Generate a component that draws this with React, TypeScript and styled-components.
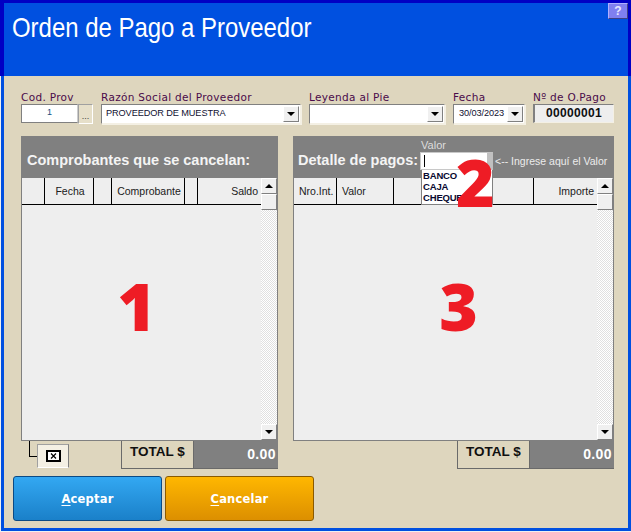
import { FC, PropsWithChildren } from 'react';
import styled, { createGlobalStyle } from 'styled-components';

const GlobalStyle = createGlobalStyle`
  html, body { margin: 0; padding: 0; background: #f0f0f0; }
  * { box-sizing: border-box; }
`;

const Window = styled.div`
  position: relative;
  width: 630px;
  height: 531px;
  margin-left: 1px;
  background: #ded6be;
  border: solid #0050e0;
  border-width: 0 3px 3px 3px;
  font-family: 'Liberation Sans', Arial, sans-serif;
`;

const Header = styled.header`
  height: 76px;
  margin: 0 -3px 0 -4px;
  padding: 9px 0 0 8px;
  background: #0050e0;
  border: solid #0000c4;
  border-width: 3px 3px 0 4px;
  color: #fff;
`;

const Title = styled.h1`
  margin: 0;
  font-size: 28px;
  line-height: 32px;
  font-weight: 400;
  white-space: nowrap;
  transform: scaleX(0.855);
  transform-origin: 0 0;
`;

const HelpButton = styled.button`
  position: absolute;
  top: 3px;
  right: 0;
  width: 20px;
  height: 16px;
  padding: 0;
  background: #8080f0;
  border: 1px solid;
  border-color: #b0b0ff #404080 #404080 #b0b0ff;
  color: #e8e8ff;
  font: bold 12px 'Liberation Sans', sans-serif;
`;

const Body = styled.main`
  padding: 14px 14px 0 17px;
`;

const FormRow = styled.div`
  display: flex;
  gap: 8px;
  height: 46px;
`;

const Field = styled.div<{ $width: number }>`
  width: ${({ $width }) => $width}px;
  flex: none;
`;

const Label = styled.label`
  display: block;
  height: 14px;
  font-family: 'DejaVu Sans', sans-serif;
  font-size: 10.5px;
  letter-spacing: 0.32px;
  line-height: 14px;
  color: #4a0a4a;
  white-space: nowrap;
`;

const InputRow = styled.div`
  display: flex;
  height: 20px;
`;

const TextBox = styled.div`
  width: 57px;
  height: 19px;
  background: #fff;
  border: 1px solid #808080;
  border-right-color: #ccc;
  color: #205080;
  font-size: 9px;
  line-height: 14px;
  text-align: center;
`;

const DotsButton = styled.div`
  width: 15px;
  height: 20px;
  background: #e6dfc9;
  border: 1px solid #a0a0a0;
  border-right-color: #fff;
  border-bottom-color: #fff;
  color: #404040;
  font-size: 9px;
  line-height: 22px;
  text-align: center;
`;

const Combo = styled.div`
  display: flex;
  justify-content: space-between;
  width: 100%;
  height: 20px;
  padding: 1px;
  background: #fff;
  border: 1px solid;
  border-color: #808080 #f4f0e4 #f4f0e4 #808080;
  box-shadow: 1px 1px 0 #f4f0e4;
`;

const ComboText = styled.span<{ $inset?: number }>`
  padding-left: ${({ $inset }) => $inset ?? 3}px;
  font-size: 9.2px;
  line-height: 14px;
  color: #101030;
  white-space: nowrap;
  letter-spacing: -0.1px;
`;

const ArrowButton = styled.span`
  flex: none;
  display: flex;
  align-items: center;
  justify-content: center;
  width: 16px;
  height: 16px;
  background: #f0f0f0;
  border: 1px solid;
  border-color: #fff #808080 #808080 #fff;
`;

const Triangle = styled.i<{ $up?: boolean }>`
  width: 0;
  height: 0;
  border-left: 4px solid transparent;
  border-right: 4px solid transparent;
  ${({ $up }) => ($up ? 'border-bottom: 4px solid #000;' : 'border-top: 4px solid #000;')}
`;

const NumberBox = styled.div`
  width: 81px;
  height: 19px;
  background: #eeeeee;
  border: 1px solid;
  border-color: #808080 #f4f0e4 #f4f0e4 #808080;
  border-width: 1px 1px 1px 2px;
  font-size: 12px;
  font-weight: 700;
  line-height: 17px;
  text-align: center;
  letter-spacing: 0.3px;
  color: #101010;
`;

const Panels = styled.div`
  display: flex;
  gap: 15px;
`;

const Panel = styled.section<{ $width: number }>`
  position: relative;
  width: ${({ $width }) => $width}px;
  flex: none;
`;

const PanelHeader = styled.div<{ $inset: number }>`
  display: flex;
  align-items: center;
  height: 41px;
  padding: 8px 0 0 ${({ $inset }) => $inset}px;
  background: #808080;
  color: #f4f4f4;
`;

const PanelTitle = styled.h2`
  margin: -2px 0 0;
  font-size: 14.5px;
  font-weight: 700;
  white-space: nowrap;
`;

const ValorField = styled.div`
  position: relative;
  width: 73px;
  height: 18px;
  margin: 0 2px 0 2px;
  background: #fff;
  border: 1px solid #c8c8c8;
  border-right: 6px solid #c0c0c0;
`;

const Caret = styled.i`
  position: absolute;
  left: 3px;
  top: 2px;
  width: 1px;
  height: 12px;
  background: #000;
`;

const ValorCaption = styled.span`
  position: absolute;
  left: 0;
  top: -14px;
  font-size: 11px;
  line-height: 12px;
  color: #dcdcdc;
`;

const DropList = styled.ul`
  position: absolute;
  left: 0;
  top: 17px;
  width: 72px;
  height: 35px;
  margin: 0;
  padding: 0 0 0 1px;
  list-style: none;
  background: #fff;
  border: 1px solid #808080;
  border-top: 0;
  overflow: hidden;
  z-index: 1;
  font-size: 9.5px;
  font-weight: 700;
  letter-spacing: -0.2px;
  line-height: 11px;
  color: #080830;
`;

const Hint = styled.span`
  font-size: 10.5px;
  color: #ececec;
  white-space: nowrap;
`;

const Grid = styled.div`
  height: 264px;
  background: #eeeeee;
  border: 1px solid #808080;
  border-top: 0;
  display: flex;
  flex-direction: column;
`;

const GridInner = styled.div`
  flex: 1;
  display: flex;
  min-height: 0;
`;

const GridMain = styled.div`
  flex: 1;
  display: flex;
  flex-direction: column;
`;

const ColumnRow = styled.div`
  display: flex;
  height: 28px;
  border-top: 1px solid #808080;
  border-bottom: 1px solid #000;
`;

const Column = styled.div<{ $width?: number; $align?: string }>`
  ${({ $width }) => ($width ? `width: ${$width}px; flex: none;` : 'flex: 1;')}
  border-right: 1px solid #000;
  padding: 0 3px 0 5px;
  font-size: 10.5px;
  line-height: 26px;
  color: #202020;
  text-align: ${({ $align }) => $align ?? 'center'};
  white-space: nowrap;
  &:last-child { border-right: 0; }
`;

const GridBody = styled.div`
  flex: 1;
  display: flex;
  align-items: center;
  justify-content: center;
  padding-bottom: 36px;
`;

const BigNumber = styled.span<{ $shift?: number }>`
  margin-left: ${({ $shift }) => $shift ?? 0}px;
  font-family: 'Open Sans', sans-serif;
  font-size: 66px;
  font-weight: 800;
  line-height: 66px;
  color: #ee1c25;
`;

const FloatingTwo = styled(BigNumber)`
  position: absolute;
  left: 163px;
  top: 12px;
  z-index: 2;
`;

const ScrollBar = styled.div`
  width: 16px;
  flex: none;
  display: flex;
  flex-direction: column;
  border-top: 1px solid #808080;
  background: repeating-conic-gradient(#e0e0e0 0 25%, #fff 0 50%) 0 0 / 2px 2px;
`;

const ScrollButton = styled.div`
  flex: none;
  display: flex;
  align-items: center;
  justify-content: center;
  height: 16px;
  background: #f0f0f0;
  border: 1px solid;
  border-color: #fff #808080 #808080 #fff;
`;

const ScrollGap = styled.div`
  flex: 1;
`;

const Footer = styled.div`
  display: flex;
  justify-content: flex-end;
  height: 28px;
  position: relative;
`;

const Connector = styled.span`
  position: absolute;
  left: 8px;
  top: 0;
  width: 9px;
  height: 16px;
  border-left: 1px solid #000;
  border-bottom: 1px solid #000;
`;

const ClearButton = styled.div`
  position: absolute;
  left: 16px;
  top: 3px;
  display: flex;
  align-items: center;
  justify-content: center;
  width: 32px;
  height: 24px;
  background: #f4f0e4;
  border: 1px solid;
  border-color: #a0a0a0 #808080 #fff #a0a0a0;
`;

const TotalLabel = styled.div`
  width: 73px;
  height: 28px;
  padding-top: 1px;
  border: 1px solid #6a6a6a;
  border-top: 0;
  font-size: 13.5px;
  font-weight: 700;
  line-height: 19px;
  text-align: center;
  color: #101010;
`;

const TotalValue = styled.div`
  width: 84px;
  height: 28px;
  padding: 4px 2px 0 0;
  background: #808080;
  border-bottom: 1px solid #6a6a6a;
  font-size: 14px;
  font-weight: 700;
  line-height: 18px;
  text-align: right;
  letter-spacing: 0.4px;
  color: #fff;
`;

const Actions = styled.div`
  display: flex;
  gap: 3px;
  margin: 7px 0 0 -8px;
`;

const ActionButton = styled.button<{ $tone: 'blue' | 'orange' }>`
  width: 149px;
  height: 45px;
  padding: 0;
  border-radius: 3px;
  border: 1px solid ${({ $tone }) => ($tone === 'blue' ? '#0b4a84' : '#8a5a00')};
  background: ${({ $tone }) =>
    $tone === 'blue'
      ? 'linear-gradient(#33a8f2, #1a80c9)'
      : 'linear-gradient(#ffb700, #dc8f00)'};
  color: #fff;
  font-family: 'DejaVu Sans', sans-serif;
  font-size: 11.5px;
  font-weight: 700;
  letter-spacing: 0.2px;
  u { text-underline-offset: 2px; }
`;

const ScrollColumn: FC = () => (
  <ScrollBar>
    <ScrollButton>
      <Triangle $up />
    </ScrollButton>
    <ScrollButton />
    <ScrollGap />
    <ScrollButton>
      <Triangle />
    </ScrollButton>
  </ScrollBar>
);

const DataGrid: FC<PropsWithChildren<{ mark: string; shift: number }>> = ({ mark, shift, children }) => (
  <Grid>
    <GridInner>
      <GridMain>
        <ColumnRow>{children}</ColumnRow>
        <GridBody>
          <BigNumber $shift={shift}>{mark}</BigNumber>
        </GridBody>
      </GridMain>
      <ScrollColumn />
    </GridInner>
  </Grid>
);

export default function App() {
  return (
    <>
      <GlobalStyle />
      <Window>
        <Header>
          <Title>Orden de Pago a Proveedor</Title>
        </Header>
        <HelpButton>?</HelpButton>
        <Body>
          <FormRow>
            <Field $width={72}>
              <Label>Cod. Prov</Label>
              <InputRow>
                <TextBox>1</TextBox>
                <DotsButton>...</DotsButton>
              </InputRow>
            </Field>
            <Field $width={200}>
              <Label>Razón Social del Proveedor</Label>
              <Combo>
                <ComboText>PROVEEDOR DE MUESTRA</ComboText>
                <ArrowButton>
                  <Triangle />
                </ArrowButton>
              </Combo>
            </Field>
            <Field $width={136}>
              <Label>Leyenda al Pie</Label>
              <Combo>
                <ComboText />
                <ArrowButton>
                  <Triangle />
                </ArrowButton>
              </Combo>
            </Field>
            <Field $width={72}>
              <Label>Fecha</Label>
              <Combo>
                <ComboText $inset={4}>30/03/2023</ComboText>
                <ArrowButton>
                  <Triangle />
                </ArrowButton>
              </Combo>
            </Field>
            <Field $width={81}>
              <Label>Nº de O.Pago</Label>
              <NumberBox>00000001</NumberBox>
            </Field>
          </FormRow>

          <Panels>
            <Panel $width={257}>
              <PanelHeader $inset={6}>
                <PanelTitle>Comprobantes que se cancelan:</PanelTitle>
              </PanelHeader>
              <DataGrid mark="1" shift={-10}>
                <Column $width={23} />
                <Column $width={49}>Fecha</Column>
                <Column $width={18} />
                <Column $width={73}>Comprobante</Column>
                <Column $width={13} />
                <Column $align="right">Saldo</Column>
              </DataGrid>
              <Footer>
                <Connector />
                <ClearButton>
                  <svg width="15" height="12" viewBox="0 0 15 12">
                    <rect x="1" y="1" width="13" height="10" fill="#fff" stroke="#000" strokeWidth="2" />
                    <path d="M5 3.5l5 5M10 3.5l-5 5" stroke="#000" strokeWidth="1.2" />
                  </svg>
                </ClearButton>
                <TotalLabel>TOTAL $</TotalLabel>
                <TotalValue>0.00</TotalValue>
              </Footer>
            </Panel>

            <Panel $width={321}>
              <PanelHeader $inset={5}>
                <PanelTitle>Detalle de pagos:</PanelTitle>
                <ValorField>
                  <ValorCaption>Valor</ValorCaption>
                  <Caret />
                  <DropList>
                    <li>BANCO</li>
                    <li>CAJA</li>
                    <li>CHEQUE</li>
                  </DropList>
                </ValorField>
                <Hint>{'<-- Ingrese aquí el Valor'}</Hint>
              </PanelHeader>
              <FloatingTwo>2</FloatingTwo>
              <DataGrid mark="3" shift={26}>
                <Column $width={43}>Nro.Int.</Column>
                <Column $width={57} $align="left">Valor</Column>
                <Column />
                <Column $width={63} $align="right">Importe</Column>
              </DataGrid>
              <Footer>
                <TotalLabel>TOTAL $</TotalLabel>
                <TotalValue>0.00</TotalValue>
              </Footer>
            </Panel>
          </Panels>

          <Actions>
            <ActionButton $tone="blue">
              <u>A</u>ceptar
            </ActionButton>
            <ActionButton $tone="orange">
              <u>C</u>ancelar
            </ActionButton>
          </Actions>
        </Body>
      </Window>
    </>
  );
}
